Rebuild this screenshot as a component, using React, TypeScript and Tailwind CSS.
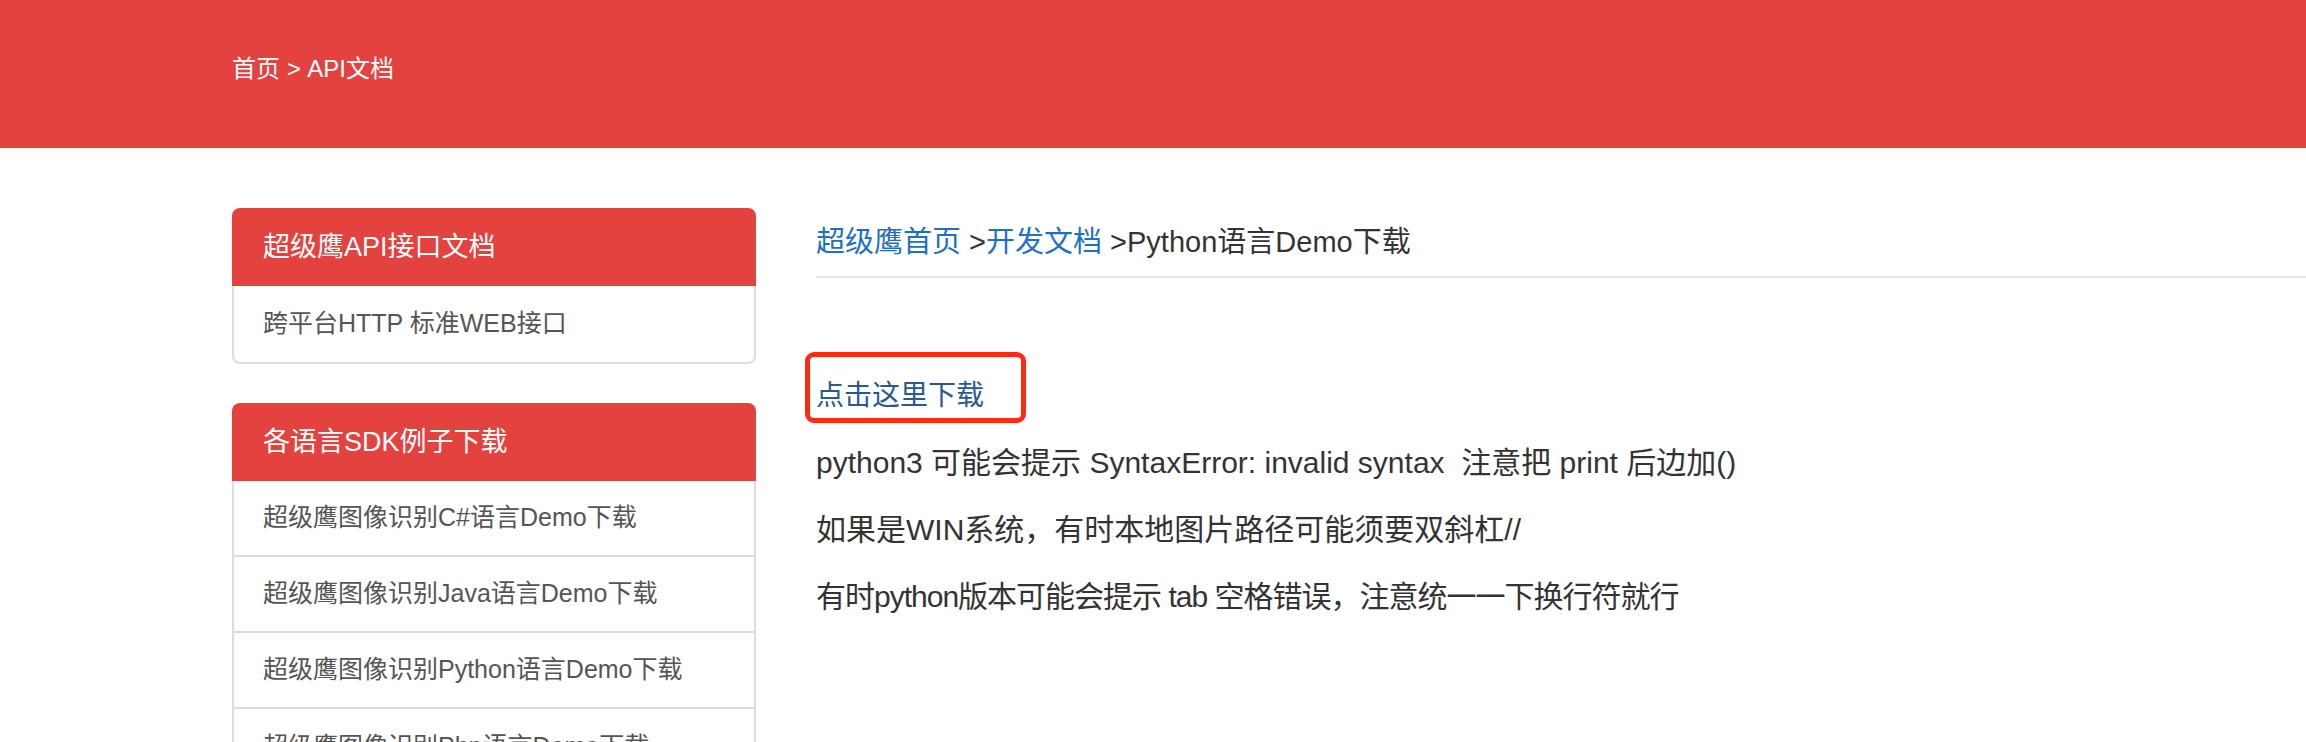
import React from "react"

const FONT = { fontFamily: "'Liberation Sans', 'Noto Sans CJK SC', sans-serif" }

const SDK_LINKS = [
  "超级鹰图像识别C#语言Demo下载",
  "超级鹰图像识别Java语言Demo下载",
  "超级鹰图像识别Python语言Demo下载",
  "超级鹰图像识别Php语言Demo下载",
]

function Panel({ title, items }: { title: string; items: string[] }) {
  return (
    <div className="w-[524px]">
      <div className="h-[78px] rounded-t-lg bg-[#e3423f] pl-[31px] flex items-center text-[27px] text-white">
        {title}
      </div>
      <div className="border-x-2 border-b-2 border-[#dddddd] rounded-b-lg">
        {items.map((t, i) => (
          <div
            key={t}
            className={
              "h-[76px] pl-[29px] flex items-center text-[25px] text-[#555555] " +
              (i < items.length - 1 ? "border-b-2 border-[#dddddd]" : "")
            }
          >
            {t}
          </div>
        ))}
      </div>
    </div>
  )
}

export default function App() {
  return (
    <div className="min-h-screen bg-white" style={FONT}>
      {/* 顶部红条 */}
      <div className="h-[148px] bg-[#e3423f] pl-[232px] pt-[57px]">
        <div className="text-[24px] leading-[24px] text-white">首页 &gt; API文档</div>
      </div>

      <div className="flex pl-[232px] pt-[60px]">
        {/* 侧边栏 */}
        <div className="flex flex-col gap-[39px] shrink-0">
          <Panel title="超级鹰API接口文档" items={["跨平台HTTP 标准WEB接口"]} />
          <Panel title="各语言SDK例子下载" items={SDK_LINKS} />
        </div>

        {/* 内容 */}
        <div className="flex-1 ml-[60px]">
          <div className="pt-[14px] pb-[14px] border-b-2 border-[#e5e5e5] text-[29px] leading-[40px] text-[#333333]">
            <span className="text-[#1f6fc5]">超级鹰首页</span> &gt;
            <span className="text-[#1f6fc5]">开发文档</span> &gt;Python语言Demo下载
          </div>

          <div className="pt-[97px]">
            <p className="relative text-[28px] leading-[42px] mb-[25px] w-fit">
              <span className="text-[#285a8e]">点击这里下载</span>
              <span className="absolute left-[-11px] top-[-23px] w-[221px] h-[71px] border-[5px] border-[#ff2a12] rounded-[9px]" />
            </p>
            <p className="text-[30px] leading-[42px] mb-[25px] text-[#333333]">
              python3 可能会提示 SyntaxError: invalid syntax &nbsp;注意把 print 后边加()
            </p>
            <p className="text-[30px] leading-[42px] mb-[25px] text-[#333333]">
              如果是WIN系统，有时本地图片路径可能须要双斜杠//
            </p>
            <p className="text-[30px] leading-[42px] mb-[25px] text-[#333333] tracking-[-1px]">
              有时python版本可能会提示 tab 空格错误，注意统一一下换行符就行
            </p>
          </div>
        </div>
      </div>
    </div>
  )
}
